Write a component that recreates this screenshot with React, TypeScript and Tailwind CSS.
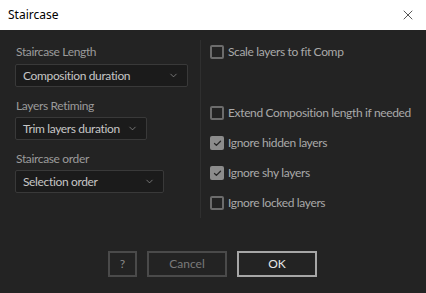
import { ChevronDown, Check, X } from 'lucide-react';

function Select({ value, width }: { value: string; width: string }) {
    return (
        <div
            className={`${width} h-[23px] shrink-0 flex items-center justify-between pl-[7px] pr-[8px] bg-[#1b1b1b] border border-[#393939] rounded-[2px] text-[#c6c6c6] whitespace-nowrap`}
        >
            <span>{value}</span>
            <ChevronDown size={11} strokeWidth={1.5} className="text-[#9a9a9a] shrink-0" />
        </div>
    );
}

function CheckRow({ label, checked }: { label: string; checked?: boolean }) {
    return (
        <div className="flex items-center gap-[4px] h-[14px] whitespace-nowrap">
            {checked ? (
                <div className="w-[14px] h-[14px] shrink-0 rounded-[2px] bg-[#8c8c8c] flex items-center justify-center">
                    <Check size={9} strokeWidth={3.5} className="text-[#262626]" />
                </div>
            ) : (
                <div className="w-[14px] h-[14px] shrink-0 rounded-[2px] border-2 border-[#6c6c6c]" />
            )}
            <span className="text-[#a9a9a9]">{label}</span>
        </div>
    );
}

export default function App() {
    return (
        <div
            className="w-[426px] h-[293px] flex flex-col bg-[#232323] text-[12px] tracking-[-0.35px]"
            style={{ fontFamily: 'Lato, "Open Sans", sans-serif' }}
        >
            <div className="h-[30px] bg-white flex items-center justify-between pl-[8px] pr-[10px] text-black tracking-normal">
                <span style={{ fontFamily: '"Noto Sans", sans-serif' }} className="text-[12px]">Staircase</span>
                <X size={16} strokeWidth={1} className="text-black" />
            </div>

            <div className="flex pt-[14px]">
                <div className="w-[200px] shrink-0 pl-[15px] flex flex-col">
                    <div className="text-[#9b9b9b] h-[16px] leading-[16px] pl-[1px]">Staircase Length</div>
                    <div className="mt-[4px]"><Select value="Composition duration" width="w-[173px]" /></div>
                    <div className="text-[#9b9b9b] h-[16px] leading-[16px] pl-[1px] mt-[11px]">Layers Retiming</div>
                    <div className="mt-[3px]"><Select value="Trim layers duration" width="w-[132px]" /></div>
                    <div className="text-[#9b9b9b] h-[16px] leading-[16px] pl-[1px] mt-[11px]">Staircase order</div>
                    <div className="mt-[3px]"><Select value="Selection order" width="w-[149px]" /></div>
                </div>
                <div className="w-px shrink-0 h-[178px] mt-[-4px] bg-[#2f2f2f]" />
                <div className="pl-[9px] pt-[1px] flex flex-col">
                    <CheckRow label="Scale layers to fit Comp" />
                    <div className="mt-[47px] flex flex-col gap-[16px]">
                        <CheckRow label="Extend Composition length if needed" />
                        <CheckRow label="Ignore hidden layers" checked />
                        <CheckRow label="Ignore shy layers" checked />
                        <CheckRow label="Ignore locked layers" />
                    </div>
                </div>
            </div>

            <div className="mt-auto mb-[16px] flex pl-[108px] gap-[10px] tracking-normal">
                <div className="w-[29px] h-[26px] border-2 border-[#4a4a4a] flex items-center justify-center text-[#8a8a8a]">?</div>
                <div className="w-[80px] h-[26px] border-2 border-[#4a4a4a] flex items-center justify-center text-[#7a7a7a]">Cancel</div>
                <div className="w-[80px] h-[26px] border-2 border-[#a6a6a6] flex items-center justify-center text-[#e6e6e6]">OK</div>
            </div>
        </div>
    );
}
